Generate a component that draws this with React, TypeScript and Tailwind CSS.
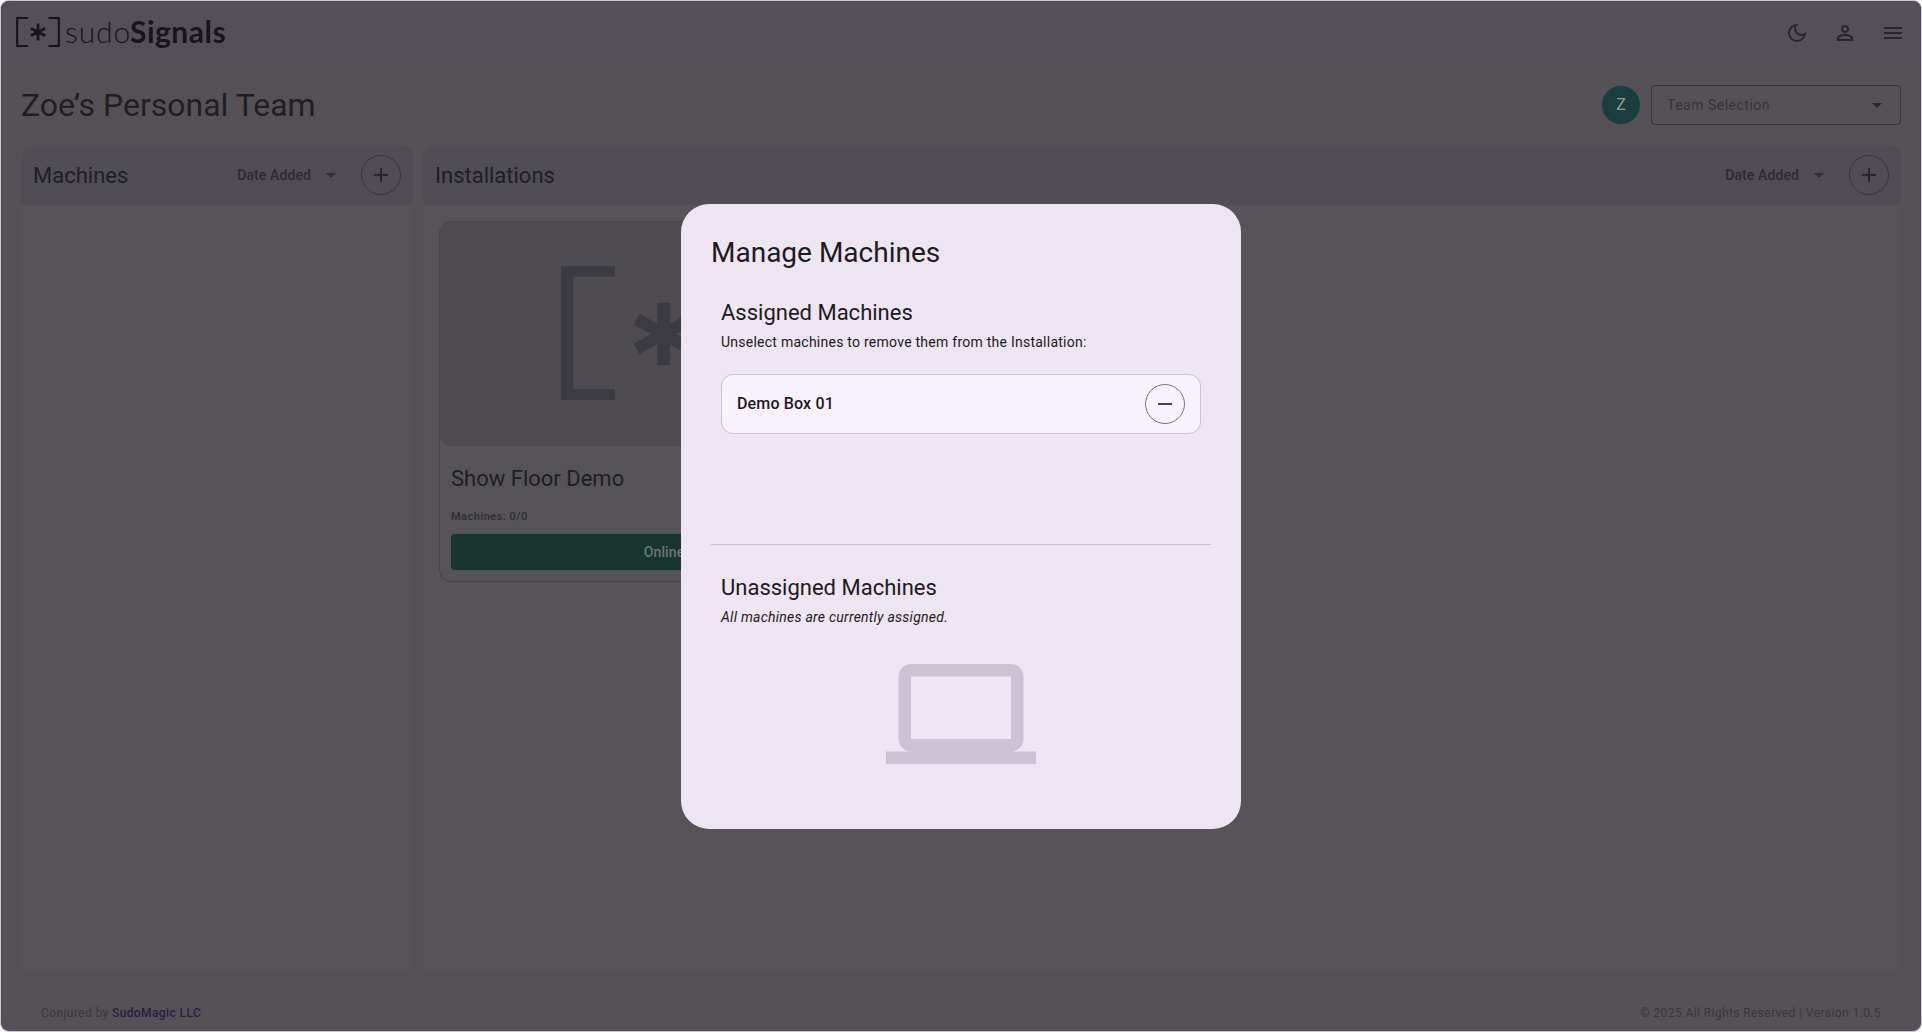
import React from 'react';
import {
  MdAdd,
  MdArrowDropDown,
  MdLaptop,
  MdMenu,
  MdPersonOutline,
  MdRemove,
} from 'react-icons/md';

function BracketMark({ className }: { className?: string }) {
  return (
    <svg viewBox="0 0 206 134" className={className} fill="currentColor">
      <path d="M0 0h54v10.5H12.3v112.8H54V134H0zM206 0h-54v10.5h41.7v112.8H152V134h54z" />
      <g transform="translate(102.7 68)">
        <rect x="-6.4" y="-31.3" width="12.8" height="62.6" />
        <rect x="-6" y="-30.8" width="12" height="61.6" transform="rotate(61.5)" />
        <rect x="-6" y="-30.8" width="12" height="61.6" transform="rotate(-61.5)" />
      </g>
    </svg>
  );
}

function Logo() {
  return (
    <div className="flex h-16 items-center pb-0.5 text-[#18161b]">
      <svg viewBox="0 0 44 30" className="h-[30px] w-11" fill="none" stroke="currentColor">
        <path d="M12 1H1.2v28H12M32.5 1h10.3v28H32.5" strokeWidth="2.2" />
        <path d="M22 6.6v16.8M14.8 11.2l14.4 7.6M14.8 18.8l14.4-7.6" strokeWidth="2.8" />
      </svg>
      <div className="ml-[5px] flex pb-[3px] font-['Lato',sans-serif] text-[30px] leading-[36px]">
        <span className="w-[65px] font-light tracking-[0.9px]">sudo</span>
        <span className="font-bold tracking-[0.5px]">Signals</span>
      </div>
    </div>
  );
}

function MoonIcon() {
  return (
    <svg viewBox="0 0 24 24" className="size-6" fill="currentColor">
      <path d="M9.37 5.51A7.35 7.35 0 0 0 9.1 7.5c0 4.08 3.32 7.4 7.4 7.4.68 0 1.35-.09 1.99-.27A7.014 7.014 0 0 1 12 19c-3.86 0-7-3.14-7-7 0-2.93 1.81-5.45 4.37-6.49zM12 3a9 9 0 1 0 9 9c0-.46-.04-.92-.1-1.36a5.389 5.389 0 0 1-4.4 2.26 5.403 5.403 0 0 1-3.14-9.8c-.44-.06-.9-.1-1.36-.1z" />
    </svg>
  );
}

function PanelHeader({ title }: { title: string }) {
  return (
    <div className="flex h-[60px] shrink-0 items-center rounded-t-xl bg-[#504d54] px-3">
      <h2 className="flex-1 pt-0.5 text-[22px] leading-7 text-[#211f24]">{title}</h2>
      <button className="flex items-center gap-2 text-sm font-medium tracking-[0.1px] text-[#2f2c34]">
        Date Added
        <MdArrowDropDown className="size-6" />
      </button>
      <button className="ml-[18px] flex size-10 items-center justify-center rounded-full border border-[#37343b] text-[#29262e]">
        <MdAdd className="size-6" />
      </button>
    </div>
  );
}

function InstallationCard() {
  return (
    <div className="h-[361px] w-[450px] rounded-xl border border-[#48454c]">
      <div className="flex h-[224px] items-center justify-center rounded-xl bg-[#4e4b51] pb-0.5 text-[#3d3b44]">
        <BracketMark className="h-[134px] w-[206px]" />
      </div>
      <div className="px-[11px] pt-[19px]">
        <h3 className="text-[22px] leading-7 text-[#211f24]">Show Floor Demo</h3>
        <p className="mt-4 text-[11px] leading-4 font-medium tracking-[0.5px] text-[#312e35]">
          Machines: 0/0
        </p>
        <div className="mt-[9px] flex h-9 items-center justify-center rounded bg-[#183530] text-sm font-medium tracking-[0.1px] text-[#6f7674]">
          Online
        </div>
      </div>
    </div>
  );
}

function ManageMachinesDialog() {
  return (
    <div className="absolute inset-0 flex items-center justify-center">
      <section className="flex h-[625px] w-[560px] flex-col rounded-[28px] bg-[#ede5f1] px-[30px] pt-[31px] text-[#1d1b20]">
        <h1 className="text-[28px] leading-9">Manage Machines</h1>
        <div className="mt-7 h-[245px] px-[10px]">
          <h2 className="text-[22px] leading-7">Assigned Machines</h2>
          <p className="mt-[5px] text-sm leading-5 tracking-[0.25px]">
            Unselect machines to remove them from the Installation:
          </p>
          <div className="mt-[22px] flex h-[60px] items-center justify-between rounded-xl border border-[#cac4d0] bg-[#f8f1fe] px-[15px]">
            <span className="text-base font-medium tracking-[0.15px]">Demo Box 01</span>
            <button className="flex size-10 items-center justify-center rounded-full border border-[#79747e] text-[#49454f]">
              <MdRemove className="size-6" />
            </button>
          </div>
        </div>
        <div className="h-px bg-[#cac4d0]" />
        <div className="mt-[29px] px-[10px]">
          <h2 className="text-[22px] leading-7">Unassigned Machines</h2>
          <p className="mt-[5px] text-sm leading-5 tracking-[0.25px] italic">
            All machines are currently assigned.
          </p>
          <MdLaptop className="mx-auto mt-3 size-[150px] text-[#cbc3d4]" />
        </div>
      </section>
    </div>
  );
}

export default function App() {
  return (
    <div className="h-[1032px] w-[1922px] bg-white font-['Roboto',sans-serif]">
      <div className="relative flex h-full flex-col overflow-hidden rounded-[9px] border border-[#c8c4d4] bg-[#565157]">
        <header className="flex h-16 shrink-0 items-center justify-between bg-[#554f5a] pr-4 pl-[15px]">
          <Logo />
          <nav className="flex items-center gap-6 text-[#29262e]">
            <MoonIcon />
            <MdPersonOutline className="size-6" />
            <MdMenu className="size-6" />
          </nav>
        </header>

        <div className="flex h-20 shrink-0 items-center px-5">
          <h1 className="flex-1 text-[32px] leading-10 text-[#211f24]">Zoe’s Personal Team</h1>
          <div className="flex size-10 items-center justify-center rounded-full border border-[#4d5356] bg-[#193e3e] text-base tracking-[0.15px] text-[#939997]">
            Z
          </div>
          <div className="ml-[10px] flex h-10 w-[250px] items-center justify-between rounded border border-[#37343b] pr-[11px] pl-[15px] text-sm tracking-[0.5px] text-[#37343b]">
            Team Selection
            <MdArrowDropDown className="size-6 text-[#29262e]" />
          </div>
        </div>

        <main className="flex h-[829px] shrink-0 gap-[10px] px-5">
          <section className="flex w-[392px] flex-col rounded-xl bg-[#565458]">
            <PanelHeader title="Machines" />
          </section>
          <section className="flex flex-1 flex-col rounded-xl bg-[#565458]">
            <PanelHeader title="Installations" />
            <div className="p-4">
              <InstallationCard />
            </div>
          </section>
        </main>

        <footer className="flex flex-1 items-center justify-between px-10 pt-5 text-xs tracking-[0.4px] text-[#3a373e]">
          <span>
            Conjured by <span className="font-medium text-[#2b2147]">SudoMagic LLC</span>
          </span>
          <span>© 2025 All Rights Reserved | Version 1.0.5</span>
        </footer>

        <ManageMachinesDialog />
      </div>
    </div>
  );
}
